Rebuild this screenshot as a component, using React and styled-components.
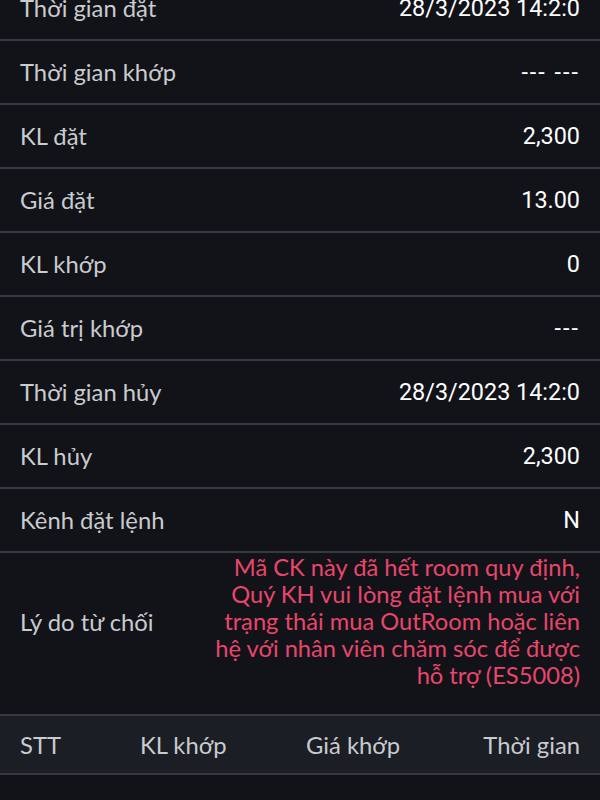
import React from 'react';
import styled, { createGlobalStyle } from 'styled-components';

const GlobalStyle = createGlobalStyle`
  html, body {
    margin: 0;
    padding: 0;
    background: #111318;
  }
  body {
    font-family: "Lato", "Noto Sans", sans-serif;
    overflow: hidden;
  }
`;

const Page = styled.div`
  width: 600px;
  height: 800px;
  background: #111318;
  overflow: hidden;
`;

const List = styled.div`
  margin-top: -23px;
`;

const Row = styled.div`
  display: flex;
  align-items: center;
  justify-content: space-between;
  height: ${(p) => (p.tall ? '137px' : '62px')};
  padding: ${(p) => (p.tall ? '0 20px 24px' : '0 20px')};
  border-bottom: 2px solid #363a40;
`;

const Label = styled.span`
  font-family: "Lato", "Noto Sans", sans-serif;
  font-size: 23.8px;
  color: #c9cbce;
  white-space: nowrap;
`;

const Value = styled.span`
  font-family: Roboto, "Noto Sans", sans-serif;
  font-size: 23.4px;
  color: #ffffff;
  white-space: nowrap;
  letter-spacing: ${(p) => (p.dashed ? '2px' : '0')};
`;

const Reason = styled.div`
  text-align: right;
  font-family: "Lato", "Noto Sans", sans-serif;
  font-size: 23.7px;
  line-height: 27px;
  color: #e8466b;
  white-space: nowrap;
`;

const TableHead = styled.div`
  display: grid;
  grid-template-columns: 120px 166px 1fr auto;
  align-items: center;
  height: 57px;
  padding: 0 20px;
  background: #1b1e24;
  border-bottom: 2px solid #363a40;
`;

const HeadCell = styled.span`
  font-family: "Lato", "Noto Sans", sans-serif;
  font-size: 23.8px;
  color: #c9cbce;
  white-space: nowrap;
`;

const rows = [
  ['Thời gian đặt', '28/3/2023 14:2:0'],
  ['Thời gian khớp', '--- ---'],
  ['KL đặt', '2,300'],
  ['Giá đặt', '13.00'],
  ['KL khớp', '0'],
  ['Giá trị khớp', '---'],
  ['Thời gian hủy', '28/3/2023 14:2:0'],
  ['KL hủy', '2,300'],
  ['Kênh đặt lệnh', 'N'],
];

const reasonLines = [
  'Mã CK này đã hết room quy định,',
  'Quý KH vui lòng đặt lệnh mua với',
  'trạng thái mua OutRoom hoặc liên',
  'hệ với nhân viên chăm sóc để được',
  'hỗ trợ (ES5008)',
];

export default function App() {
  return (
    <Page>
      <GlobalStyle />
      <List>
        {rows.map(([label, value]) => (
          <Row key={label}>
            <Label>{label}</Label>
            <Value dashed={value.startsWith('-')}>{value}</Value>
          </Row>
        ))}
        <Row tall>
          <Label>Lý do từ chối</Label>
          <Reason>
            {reasonLines.map((line) => (
              <div key={line}>{line}</div>
            ))}
          </Reason>
        </Row>
      </List>
      <TableHead>
        <HeadCell>STT</HeadCell>
        <HeadCell>KL khớp</HeadCell>
        <HeadCell>Giá khớp</HeadCell>
        <HeadCell>Thời gian</HeadCell>
      </TableHead>
    </Page>
  );
}
